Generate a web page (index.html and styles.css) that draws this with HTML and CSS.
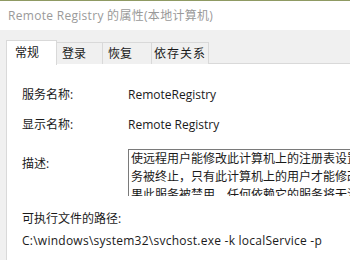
FILE: index.html
```html
<!DOCTYPE html>
<html lang="zh-CN">
<head>
    <meta charset="UTF-8">
    <title>Remote Registry 的属性(本地计算机)</title>
    <link rel="stylesheet" href="styles.css">
</head>
<body>
    <div class="window">
        <div class="title-bar">Remote Registry 的属性(本地计算机)</div>

        <div class="dialog">
            <!-- Tabs -->
            <ul class="tabs">
                <li class="tab active">常规</li>
                <li class="tab tab-login">登录</li>
                <li class="tab tab-recovery">恢复</li>
                <li class="tab tab-deps">依存关系</li>
            </ul>

            <!-- General page -->
            <div class="tab-page">
                <div class="field-row">
                    <span class="label">服务名称:</span>
                    <span class="value">RemoteRegistry</span>
                </div>
                <div class="field-row">
                    <span class="label">显示名称:</span>
                    <span class="value">Remote Registry</span>
                </div>
                <div class="field-row desc-row">
                    <span class="label">描述:</span>
                    <div class="desc-box">使远程用户能修改此计算机上的注册表设置。如果此服<br>务被终止，只有此计算机上的用户才能修改注册表。如<br>果此服务被禁用，任何依赖它的服务将无法启动。</div>
                </div>
                <div class="path-label">可执行文件的路径:</div>
                <div class="path-value">C:\windows\system32\svchost.exe -k localService -p</div>
            </div>
        </div>
    </div>
</body>
</html>
```

FILE: styles.css
```css
* {
    margin: 0;
    padding: 0;
    box-sizing: border-box;
}

body {
    width: 350px;
    height: 260px;
    overflow: hidden;
    font-family: 'Open Sans', 'Noto Sans CJK SC', sans-serif;
    font-size: 12px;
    color: #1a1a1a;
    background-color: #f0f0f0;
}

.window {
    width: 350px;
    border-top: 1px solid #8f9a63;
}

/* Title bar */
.title-bar {
    height: 29px;
    background-color: #fff;
    color: #9a9a9a;
    font-size: 12px;
    line-height: 30px;
    padding-left: 8px;
    letter-spacing: 0.3px;
}

.dialog {
    padding: 10px 0 0 6px;
    overflow: hidden;
}

/* Tabs */
.tabs {
    list-style: none;
    display: flex;
    height: 24px;
    border-bottom: 1px solid #d9d9d9;
}

.tab {
    height: 22px;
    margin-top: 2px;
    padding-left: 5px;
    line-height: 22px;
    border: 1px solid #d9d9d9;
    border-bottom: none;
    border-left: none;
    background-color: #f0f0f0;
}

.tab.active {
    width: 51px;
    height: 25px;
    margin-top: 0;
    margin-bottom: -1px;
    padding-left: 8px;
    line-height: 24px;
    border-left: 1px solid #d9d9d9;
    background-color: #fff;
}

.tab-login {
    width: 46px;
}

.tab-recovery {
    width: 49px;
}

.tab-deps {
    width: 57px;
    padding-left: 2px;
    letter-spacing: 1px;
}

/* Page */
.tab-page {
    height: 200px;
    background-color: #fff;
    border-left: 1px solid #d9d9d9;
    padding: 15px 0 0 15px;
}

.field-row {
    display: flex;
    align-items: center;
    height: 30px;
}

.label {
    width: 106px;
    flex-shrink: 0;
}

.desc-row {
    align-items: flex-start;
    margin-top: 10px;
    height: 47px;
}

.desc-row .label {
    padding-top: 6px;
    line-height: 18px;
}

.desc-box {
    flex: 1;
    min-width: 0;
    height: 47px;
    overflow: hidden;
    white-space: nowrap;
    border-top: 1px solid #7a7a7a;
    border-left: 1px solid #7a7a7a;
    padding: 0 0 0 2px;
    line-height: 18px;
}

.path-label {
    margin-top: 12px;
    line-height: 22px;
}

.path-value {
    line-height: 22px;
    white-space: nowrap;
    letter-spacing: 0.25px;
}
```
